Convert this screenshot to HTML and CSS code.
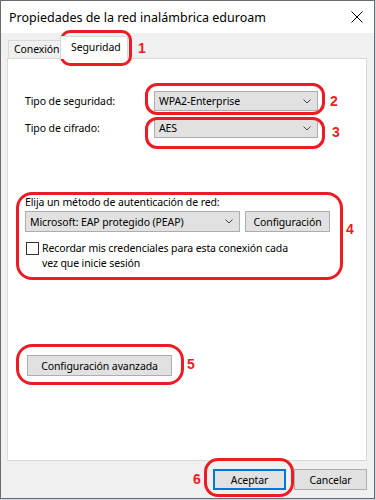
FILE: index.html
```html
<!DOCTYPE html>
<html lang="es">
<head>
    <meta charset="UTF-8">
    <title>Propiedades de la red inalámbrica eduroam</title>
    <link rel="stylesheet" href="styles.css">
</head>
<body>
    <div class="window">
        <div class="titlebar">
            <span class="title">Propiedades de la red inalámbrica eduroam</span>
            <svg class="close" width="12" height="12" viewBox="0 0 12 12">
                <path d="M0.5 0.5 L11.5 11.5 M11.5 0.5 L0.5 11.5" stroke="#000" stroke-width="1" fill="none"/>
            </svg>
        </div>

        <div class="dialog">
            <div class="tabs">
                <div class="tab">Conexión</div>
                <div class="tab active">Seguridad</div>
            </div>

            <div class="panel">
                <div class="field-row">
                    <label class="field-label">Tipo de seguridad:</label>
                    <div class="combo wide">
                        <span>WPA2-Enterprise</span>
                        <svg class="chevron" width="8" height="5" viewBox="0 0 8 5"><path d="M0.5 0.5 L4 4 L7.5 0.5" stroke="#444" fill="none"/></svg>
                    </div>
                </div>
                <div class="field-row">
                    <label class="field-label">Tipo de cifrado:</label>
                    <div class="combo wide">
                        <span>AES</span>
                        <svg class="chevron" width="8" height="5" viewBox="0 0 8 5"><path d="M0.5 0.5 L4 4 L7.5 0.5" stroke="#444" fill="none"/></svg>
                    </div>
                </div>

                <div class="auth">
                    <div class="auth-title">Elija un método de autenticación de red:</div>
                    <div class="auth-row">
                        <div class="combo method">
                            <span>Microsoft: EAP protegido (PEAP)</span>
                            <svg class="chevron" width="8" height="5" viewBox="0 0 8 5"><path d="M0.5 0.5 L4 4 L7.5 0.5" stroke="#444" fill="none"/></svg>
                        </div>
                        <button class="btn config">Configuración</button>
                    </div>
                    <div class="check-row">
                        <span class="checkbox"></span>
                        <span class="check-text">Recordar mis credenciales para esta conexión cada<br>vez que inicie sesión</span>
                    </div>
                </div>

                <button class="btn advanced">Configuración avanzada</button>
            </div>

            <div class="footer">
                <button class="btn default">Aceptar</button>
                <button class="btn">Cancelar</button>
            </div>
        </div>

        <!-- red annotations -->
        <div class="mark m1"></div>
        <div class="mark m2"></div>
        <div class="mark m3"></div>
        <div class="mark m4"></div>
        <div class="mark m5"></div>
        <div class="mark m6"></div>
        <span class="num n1">1</span>
        <span class="num n2">2</span>
        <span class="num n3">3</span>
        <span class="num n4">4</span>
        <span class="num n5">5</span>
        <span class="num n6">6</span>
    </div>
</body>
</html>
```

FILE: styles.css
```css
body {
    margin: 0;
    background-color: #c9d7e6;
    font-family: "Noto Sans", sans-serif;
    font-size: 10.5px;
    letter-spacing: -0.1px;
    color: #000;
}

.window {
    position: relative;
    width: 375px;
    height: 499px;
    box-sizing: border-box;
    border: 1px solid #6b6b6b;
    background-color: #f0f0f0;
    overflow: hidden;
}

.titlebar {
    display: flex;
    align-items: center;
    justify-content: space-between;
    height: 32px;
    padding: 0 11px 0 8px;
    background-color: #fff;
}

.title {
    font-size: 12.5px;
    letter-spacing: 0;
}

.dialog {
    padding: 3px 7px 0 6px;
}

.tabs {
    display: flex;
    align-items: flex-end;
    height: 22px;
    padding-left: 1px;
}

.tab {
    width: 53px;
    height: 18px;
    line-height: 17px;
    padding: 0 0 0 5px;
    box-sizing: border-box;
    border: 1px solid #d9d9d9;
    border-bottom: none;
    background-color: #f0f0f0;
    white-space: nowrap;
    overflow: hidden;
}

.tab.active {
    width: 68px;
    height: 23px;
    line-height: 20px;
    padding: 0 0 0 10px;
    background-color: #fff;
    margin-bottom: -1px;
    margin-left: -1px;
    position: relative;
    z-index: 1;
}

.panel {
    height: 403px;
    box-sizing: border-box;
    border: 1px solid #d9d9d9;
    background-color: #fff;
    padding: 32px 16px 0 17px;
}

.field-row {
    display: flex;
    align-items: center;
    margin-bottom: 7px;
}

.field-label {
    width: 129px;
}

.combo {
    display: flex;
    align-items: center;
    justify-content: space-between;
    height: 20px;
    box-sizing: border-box;
    padding: 0 6px 0 4px;
    border: 1px solid #adadad;
    background-color: #e1e1e1;
}

.combo.wide {
    width: 164px;
}

.chevron {
    display: block;
}

.auth {
    margin-top: 57px;
}

.auth-title {
    height: 16px;
}

.auth-row {
    display: flex;
}

.combo.method {
    width: 215px;
    height: 21px;
    padding-left: 4px;
}

.btn {
    font-family: "Noto Sans", sans-serif;
    font-size: 10.5px;
    letter-spacing: -0.1px;
    color: #000;
    height: 21px;
    padding: 0;
    border: 1px solid #adadad;
    background-color: #e1e1e1;
    box-sizing: border-box;
}

.config {
    width: 85px;
    margin-left: 5px;
}

.check-row {
    display: flex;
    margin-top: 9px;
}

.checkbox {
    width: 13px;
    height: 13px;
    box-sizing: border-box;
    border: 1px solid #333;
    background-color: #fff;
    margin: 1px 3px 0 1px;
    flex-shrink: 0;
}

.check-text {
    line-height: 15px;
}

.advanced {
    display: block;
    width: 145px;
    margin-top: 84px;
    margin-left: 2px;
}

.footer {
    display: flex;
    justify-content: flex-end;
    gap: 8px;
    padding-top: 8px;
}

.footer .btn {
    width: 73px;
}

.footer .default {
    border: 2px solid #0078d7;
}

/* red annotations */
.mark {
    position: absolute;
    border: 3px solid #ed1c24;
    border-radius: 12px;
    box-sizing: border-box;
}

.m1 { left: 59px; top: 29px; width: 72px; height: 36px; border-radius: 10px; }
.m2 { left: 144px; top: 82px; width: 180px; height: 32px; }
.m3 { left: 144px; top: 116px; width: 180px; height: 32px; }
.m4 { left: 15px; top: 191px; width: 327px; height: 88px; border-radius: 16px; }
.m5 { left: 15px; top: 343px; width: 168px; height: 41px; border-radius: 16px; }
.m6 { left: 203px; top: 457px; width: 90px; height: 39px; border-radius: 14px; }

.num {
    position: absolute;
    color: #ed1c24;
    font-family: "Liberation Sans", sans-serif;
    font-weight: bold;
    font-size: 14px;
    line-height: 14px;
    letter-spacing: 0;
}

.n1 { left: 137px; top: 40px; }
.n2 { left: 329px; top: 93px; }
.n3 { left: 331px; top: 124px; }
.n4 { left: 345px; top: 221px; }
.n5 { left: 186px; top: 356px; }
.n6 { left: 192px; top: 471px; }
```
